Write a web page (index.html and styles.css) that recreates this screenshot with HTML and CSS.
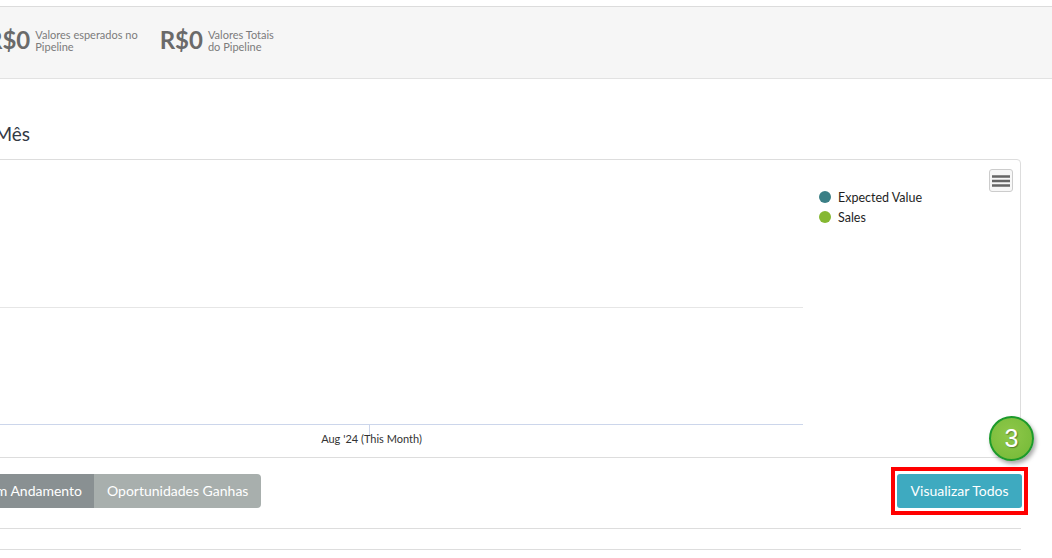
FILE: index.html
```html
<!DOCTYPE html>
<html lang="pt-BR">
<head>
<meta charset="utf-8">
<title>Pipeline</title>
<link rel="stylesheet" href="styles.css">
</head>
<body>
<div class="page">
  <header class="stats">
    <div class="stat first">
      <span class="stat-num">R$0</span>
      <span class="stat-label">Valores esperados no<br>Pipeline</span>
    </div>
    <div class="stat">
      <span class="stat-num">R$0</span>
      <span class="stat-label">Valores Totais<br>do Pipeline</span>
    </div>
  </header>

  <section class="dashlet">
    <h2 class="title"><span>Oportunidades por Mês</span></h2>

    <div class="chart">
      <div class="plot">
        <div class="plot-top"></div>
        <div class="gridline"></div>
        <div class="plot-band"></div>
        <div class="axis"></div>
        <div class="xaxis">
          <span class="tick"></span>
          <span class="xlabel">Aug '24 (This Month)</span>
        </div>
      </div>
      <ul class="legend">
        <li class="legend-item"><span class="dot teal"></span>Expected Value</li>
        <li class="legend-item"><span class="dot green"></span>Sales</li>
      </ul>
      <button class="menu-btn" aria-label="Menu">
        <svg width="18" height="14" viewBox="0 0 18 14"><path d="M0 2.5h18M0 7h18M0 11.5h18" stroke="#666" stroke-width="2.5"/></svg>
      </button>
    </div>

    <div class="actions">
      <div class="btn-group">
        <button class="btn btn-dark"><span>Oportunidades em Andamento</span></button>
        <button class="btn btn-light">Oportunidades Ganhas</button>
      </div>
      <span class="highlight">
        <button class="btn btn-primary">Visualizar Todos</button>
      </span>
    </div>
    <div class="rule"></div>
  </section>

  <div class="step-badge">3</div>
</div>
</body>
</html>
```

FILE: styles.css
```css
html, body {
  margin: 0;
  padding: 0;
  width: 1052px;
  height: 558px;
  overflow: hidden;
  background: #ffffff;
}

body {
  font-family: Lato, "Open Sans", "Liberation Sans", sans-serif;
  color: #333;
}

.page {
  position: relative;
  padding-top: 6px;
}

/* Header statistics band */
.stats {
  display: flex;
  gap: 22px;
  height: 73px;
  box-sizing: border-box;
  padding-top: 19px;
  background: #f6f6f6;
  border-top: 1px solid #dcdcdc;
  border-bottom: 1px solid #e2e2e2;
}

.stat {
  display: flex;
  align-items: center;
  gap: 5px;
  height: 28px;
}

.stat.first {
  margin-left: -13px;
}

.stat-num {
  font-size: 24px;
  line-height: 28px;
  font-weight: 700;
  color: #6a6a6a;
}

.stat-label {
  font-size: 11px;
  line-height: 12px;
  color: #7b7b7b;
  margin-top: 2px;
}

/* Dashlet */
.dashlet {
  padding-top: 43px;
  width: 1082px;
  margin-left: -61px;
}

.title {
  margin: 0 0 14px 0;
  font-size: 19px;
  line-height: 23px;
  font-weight: 400;
  color: #333a44;
  width: 91px;
  display: flex;
  justify-content: flex-end;
  white-space: nowrap;
}

.chart {
  position: relative;
  display: flex;
  height: 299px;
  box-sizing: border-box;
  border: 1px solid #dddddd;
  border-top-right-radius: 4px;
}

.plot {
  width: 863px;
  display: flex;
  flex-direction: column;
}

.plot-top {
  height: 147px;
}

.gridline {
  height: 1px;
  background: #e6e6e6;
}

.plot-band {
  height: 116px;
}

.axis {
  height: 1px;
  background: #ccd6eb;
}

.xaxis {
  display: grid;
}

.tick {
  grid-area: 1 / 1;
  justify-self: start;
  width: 1px;
  height: 10px;
  margin-left: 429px;
  background: #ccd6eb;
}

.xlabel {
  grid-area: 1 / 1;
  justify-self: center;
  margin-top: 7px;
  font-size: 11px;
  line-height: 13px;
  color: #333;
  white-space: nowrap;
}

.legend {
  list-style: none;
  margin: 0;
  padding: 27px 0 0 16px;
}

.legend-item {
  display: flex;
  align-items: center;
  gap: 7px;
  height: 20px;
  font-size: 12.5px;
  font-weight: 400;
  color: #1e1e1e;
  white-space: nowrap;
}

.dot {
  width: 12px;
  height: 12px;
  border-radius: 50%;
}

.dot.teal { background: #3b7f86; }
.dot.green { background: #85b832; }

.menu-btn {
  position: absolute;
  top: 9px;
  right: 7px;
  width: 24px;
  height: 23px;
  padding: 0;
  display: flex;
  align-items: center;
  justify-content: center;
  background: #f7f7f7;
  border: 1px solid #cccccc;
  border-radius: 3px;
}

/* Actions */
.actions {
  display: flex;
  align-items: center;
  justify-content: space-between;
  padding: 9px 0 13px 0;
  border-bottom: 1px solid #dddddd;
}

.btn-group {
  display: flex;
}

.btn {
  font-family: Lato, "Open Sans", "Liberation Sans", sans-serif;
  font-size: 14px;
  line-height: 18px;
  padding: 8px 13px;
  border: none;
  color: #ffffff;
  white-space: nowrap;
}

.btn-dark {
  width: 155px;
  display: flex;
  justify-content: flex-end;
  background: #899092;
  padding-right: 12px;
}

.btn-light {
  background: #a8afad;
  border-radius: 0 4px 4px 0;
}

.highlight {
  display: flex;
  padding: 3px 2px;
  margin-right: -7px;
  border: 4px solid #ff0000;
}

.btn-primary {
  background: #3eaac0;
  border-radius: 3px;
  padding: 8px 13.5px;
}

.rule {
  margin-top: 20px;
  border-top: 1px solid #dddddd;
}

.step-badge {
  position: absolute;
  left: 989px;
  top: 416px;
  width: 45px;
  height: 45px;
  box-sizing: border-box;
  border-radius: 50%;
  border: 2px solid #1d9a2c;
  background: radial-gradient(circle at 45% 40%, #8fc84a 0%, #7bbd3c 70%, #6fb431 100%);
  box-shadow: 2px 3px 4px rgba(0, 0, 0, 0.35);
  color: #ffffff;
  font-family: "Liberation Sans", Arial, sans-serif;
  font-size: 25px;
  line-height: 41px;
  text-align: center;
  text-shadow: 1px 1px 1px rgba(0, 0, 0, 0.35);
}
```
